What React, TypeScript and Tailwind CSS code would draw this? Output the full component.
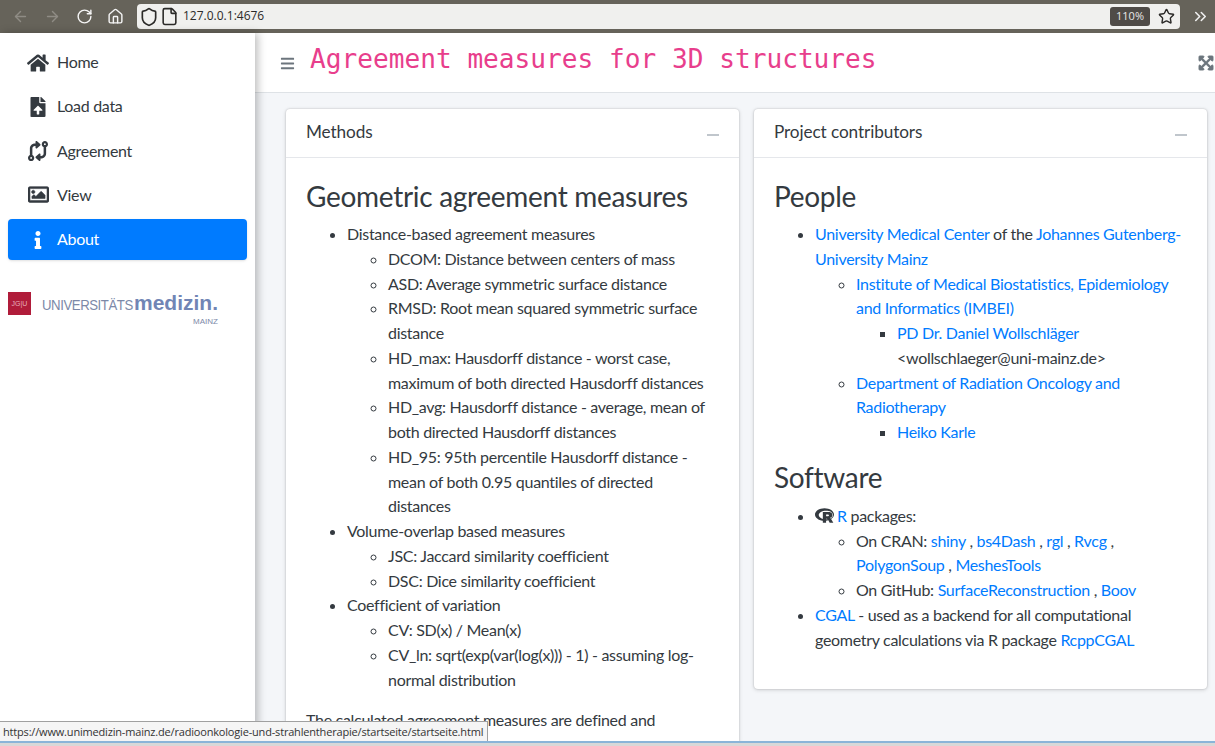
import { FaHome, FaFileUpload, FaInfo, FaRegImage, FaExpandArrowsAlt, FaBars, FaRProject } from "react-icons/fa";
import { FaCodeCompare } from "react-icons/fa6";
import { ArrowLeft, ArrowRight, RotateCw, House, Shield, File, Star, ChevronsRight } from "lucide-react";
import type { ReactNode } from "react";

const A = ({ children }: { children: ReactNode }) => <a className="text-[#007bff]">{children}</a>;

function NavItem({ icon, label, active }: { icon: ReactNode; label: string; active?: boolean }) {
  return (
    <div className={`flex items-center h-[41px] rounded-[4px] mb-[3.25px] pl-[19px] ${active ? "bg-[#007bff] text-white shadow" : "text-[#343a40]"}`}>
      <span className="w-[22px] flex justify-center text-[20px]">{icon}</span>
      <span className="ml-[8px]">{label}</span>
    </div>
  );
}

function Card({ title, className, children }: { title: string; className: string; children: ReactNode }) {
  return (
    <section className={`w-[453px] bg-white rounded-[4px] shadow-[0_0_2px_rgba(0,0,0,0.2),0_1px_4px_rgba(0,0,0,0.15)] ${className}`}>
      <div className="h-[49px] flex items-center justify-between pl-[20px] pr-[20px] pb-[2px] border-b border-[#e5e7eb] text-[17.2px] tracking-[-0.1px]">
        <span>{title}</span>
        <div className="w-[12px] h-[2px] bg-[#c0c6cc] mt-[5px]" />
      </div>
      <div className="px-[20px] pt-[21px]">{children}</div>
    </section>
  );
}

const H = ({ children, className = "mb-[8px]" }: { children: ReactNode; className?: string }) => <h2 className={`text-[28px] tracking-[-0.3px] leading-[35px] ${className}`}>{children}</h2>;
const UL1 = ({ children }: { children: ReactNode }) => <ul className="list-disc pl-[41px]">{children}</ul>;
const UL2 = ({ children }: { children: ReactNode }) => <ul className="list-[circle] pl-[41px]">{children}</ul>;
const UL3 = ({ children }: { children: ReactNode }) => <ul className="list-[square] pl-[41px]">{children}</ul>;

export default function App() {
  return (
    <div className="relative w-[1215px] h-[746px] overflow-hidden flex flex-col text-[#343a40] text-[16px] tracking-[-0.3px] leading-[24.75px] font-['Lato','Open_Sans',sans-serif]">
      <header className="h-[33px] shrink-0 bg-[#66635a] flex items-center pl-[12px] pr-[3px] text-white tracking-normal">
        <ArrowLeft size={17} className="shrink-0 text-[#8f8c85]" />
        <ArrowRight size={17} className="shrink-0 text-[#8f8c85] ml-[15px]" />
        <RotateCw size={17} className="shrink-0 ml-[15px] text-[#f5f5f5]" />
        <House size={17} className="shrink-0 ml-[14px] text-[#f5f5f5]" />
        <div className="ml-[13px] w-[1043px] shrink-0 h-[25px] bg-[#f0f0ee] rounded-[4px] flex items-center pl-[2px] pr-[5px] text-[#2b2a28]">
          <Shield size={20} />
          <File size={19} className="ml-[0.5px]" />
          <span className="ml-[4.5px] text-[12px] font-['Open_Sans',sans-serif]">127.0.0.1:4676</span>
          <span className="ml-auto w-[40px] h-[19px] bg-[#4f4b47] rounded-[3px] text-[#e8e8e8] text-[11px] flex items-center justify-center font-['Open_Sans',sans-serif]">110%</span>
          <Star size={17} className="ml-[8px]" />
        </div>
        <ChevronsRight size={19} className="shrink-0 ml-[11px] text-[#f0f0f0]" />
      </header>
      <div className="flex flex-1 min-h-0">
        <aside className="w-[255px] shrink-0 bg-white pl-[8px] pr-[8px] pt-[9px] shadow-[3px_0_8px_rgba(0,0,0,0.25)] z-10">
          <NavItem icon={<FaHome className="text-[22px]" />} label="Home" />
          <NavItem icon={<FaFileUpload />} label="Load data" />
          <NavItem icon={<FaCodeCompare />} label="Agreement" />
          <NavItem icon={<FaRegImage stroke="currentColor" strokeWidth={14} className="text-[21px] mb-[2px]" />} label="View" />
          <NavItem active icon={<FaInfo className="text-[18px]" />} label="About" />
          <div className="mt-[32px] flex items-start tracking-normal">
            <div className="w-[23px] h-[23px] shrink-0 bg-[#b01c3a] text-[#e8b0bc] text-[7px] leading-[23px] text-center font-['Liberation_Sans',sans-serif]">JG|U</div>
            <div className="ml-[11px] w-[176px] text-[#7c89a8] font-['Liberation_Sans',sans-serif]">
              <div className="flex items-baseline whitespace-nowrap leading-[21px]">
                <span className="w-[91px] shrink-0 inline-block origin-left scale-x-[0.88] text-[15px] tracking-[-0.5px]">UNIVERSITÄTS</span>
                <span className="ml-[1px] text-[21px] font-bold text-[#7185b5]">medizin.</span>
              </div>
              <div className="text-[8px] leading-[9px] text-right mt-[2px]">MAINZ</div>
            </div>
          </div>
        </aside>
        <main className="flex-1 min-w-0 bg-[#f4f6f9] flex flex-col">
          <div className="h-[60px] shrink-0 bg-white border-b border-[#dee2e6] flex items-center pl-[25px]">
            <FaBars className="text-[#6c757d] text-[15px] mt-[2px]" />
            <h1 className="ml-[15px] text-[26.15px] tracking-normal text-[#e83e8c] font-['DejaVu_Sans_Mono',monospace] leading-none mb-[6px]">Agreement measures for 3D structures</h1>
            <FaExpandArrowsAlt stroke="currentColor" strokeWidth={30} className="ml-auto mr-[1px] text-[#6c757d] text-[16px]" />
          </div>
          <div className="flex gap-[15px] pl-[31px] pt-[16px] items-start">
            <Card title="Methods" className="h-[700px]">
              <H>Geometric agreement measures</H>
              <UL1>
                <li>Distance-based agreement measures
                  <UL2>
                    <li>DCOM: Distance between centers of mass</li>
                    <li>ASD: Average symmetric surface distance</li>
                    <li>RMSD: Root mean squared symmetric surface distance</li>
                    <li>HD_max: Hausdorff distance - worst case, maximum of both directed Hausdorff distances</li>
                    <li>HD_avg: Hausdorff distance - average, mean of both directed Hausdorff distances</li>
                    <li>HD_95: 95th percentile Hausdorff distance - mean of both 0.95 quantiles of directed distances</li>
                  </UL2>
                </li>
                <li>Volume-overlap based measures
                  <UL2>
                    <li>JSC: Jaccard similarity coefficient</li>
                    <li>DSC: Dice similarity coefficient</li>
                  </UL2>
                </li>
                <li>Coefficient of variation
                  <UL2>
                    <li>CV: SD(x) / Mean(x)</li>
                    <li>CV_ln: sqrt(exp(var(log(x))) - 1) - assuming log-normal distribution</li>
                  </UL2>
                </li>
              </UL1>
              <p className="mt-[16px]">The calculated agreement measures are defined and</p>
            </Card>
            <Card title="Project contributors" className="h-[580px]">
              <H>People</H>
              <UL1>
                <li><A>University Medical Center</A> of the <A>Johannes Gutenberg-University Mainz</A>
                  <UL2>
                    <li><A>Institute of Medical Biostatistics, Epidemiology and Informatics (IMBEI)</A>
                      <UL3>
                        <li><A>PD Dr. Daniel Wollschläger</A> &lt;wollschlaeger@uni-mainz.de&gt;</li>
                      </UL3>
                    </li>
                    <li><A>Department of Radiation Oncology and Radiotherapy</A>
                      <UL3>
                        <li><A>Heiko Karle</A></li>
                      </UL3>
                    </li>
                  </UL2>
                </li>
              </UL1>
              <H className="mt-[15px] mb-[9px]">Software</H>
              <UL1>
                <li><FaRProject className="inline text-[19px] mr-[3px] align-[-3px] text-[#343a40]" /><A>R</A> packages:
                  <UL2>
                    <li>On CRAN: <A>shiny</A> , <A>bs4Dash</A> , <A>rgl</A> , <A>Rvcg</A> , <A>PolygonSoup</A> , <A>MeshesTools</A></li>
                    <li>On GitHub: <A>SurfaceReconstruction</A> , <A>Boov</A></li>
                  </UL2>
                </li>
                <li><A>CGAL</A> - used as a backend for all computational geometry calculations via R package <A>RcppCGAL</A></li>
              </UL1>
            </Card>
          </div>
        </main>
      </div>
      <div className="absolute left-0 bottom-[5px] h-[20px] bg-[#f5f5f5] border-t border-r border-[#a0a0a0] pl-[3px] pr-[4px] text-[11px] leading-[19px] text-[#333] whitespace-nowrap font-['Open_Sans',sans-serif] tracking-[-0.18px] z-20">https://www.unimedizin-mainz.de/radioonkologie-und-strahlentherapie/startseite/startseite.html</div>
      <div className="absolute left-0 right-0 bottom-0 h-[5px] bg-[#d8d8d8] border-t-2 border-[#8ab4d8] z-20" />
    </div>
  );
}
